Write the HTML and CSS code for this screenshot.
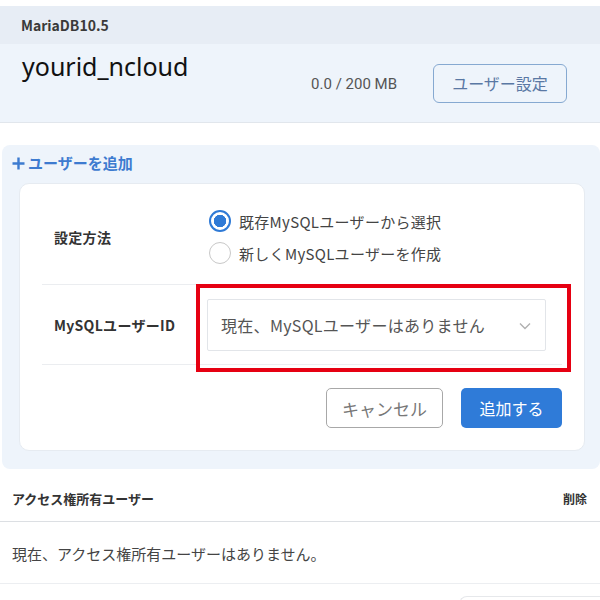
FILE: index.html
```html
<!DOCTYPE html>
<html lang="ja">
<head>
<meta charset="utf-8">
<link rel="stylesheet" href="styles.css">
</head>
<body>
<div class="page">
  <div class="db-header">MariaDB10.5</div>
  <div class="account">
    <div class="name">yourid_ncloud</div>
    <div class="usage">0.0 / 200 MB</div>
    <button class="btn-settings">ユーザー設定</button>
  </div>

  <section class="add-panel">
    <div class="add-title"><svg class="plus" width="13" height="13" viewBox="0 0 13 13"><path d="M6.5 0.5 V12.5 M0.5 6.5 H12.5" stroke="#3d7bd0" stroke-width="2.4" fill="none"/></svg>ユーザーを追加</div>
    <div class="card">
      <div class="row row-method">
        <div class="label">設定方法</div>
        <div class="field radios">
          <label class="radio"><span class="dot on"></span>既存MySQLユーザーから選択</label>
          <label class="radio"><span class="dot"></span>新しくMySQLユーザーを作成</label>
        </div>
      </div>
      <div class="row row-id">
        <div class="label">MySQLユーザーID</div>
        <div class="field">
          <div class="select">
            <span>現在、MySQLユーザーはありません</span>
            <svg class="chev" width="12" height="8" viewBox="0 0 12 8"><path d="M1 1.5 L6 6.5 L11 1.5" fill="none" stroke="#b0b0b0" stroke-width="1.4"/></svg>
          </div>
        </div>
      </div>
      <div class="actions">
        <button class="btn-cancel">キャンセル</button>
        <button class="btn-add">追加する</button>
      </div>
      <div class="highlight"></div>
    </div>
  </section>

  <div class="list-head">
    <span>アクセス権所有ユーザー</span>
    <span>削除</span>
  </div>
  <div class="list-empty">現在、アクセス権所有ユーザーはありません。</div>
  <div class="next-box"></div>
</div>
</body>
</html>
```

FILE: styles.css
```css
* { box-sizing: border-box; }
body {
  margin: 0;
  background: #fff;
  font-family: "Noto Sans CJK JP", "Noto Sans", "Liberation Sans", sans-serif;
  color: #333;
}
.page { width: 600px; padding-top: 6px; }

.db-header {
  height: 38px;
  background: #e7edf5;
  padding-left: 21px;
  display: flex;
  align-items: center;
  font-size: 14px;
  font-weight: bold;
  color: #3a3a3a;
}

.account {
  height: 79px;
  background: #eef4fb;
  border-bottom: 1px solid #e1e6ec;
  display: flex;
  align-items: center;
  padding: 0 33px 0 22px;
}
.name {
  align-self: flex-start;
  margin-top: 5px;
  font-size: 25px;
  line-height: 34px;
  color: #111;
  font-family: "Noto Sans", "Noto Sans CJK JP", sans-serif;
}
.usage {
  margin-left: auto;
  margin-right: 36px;
  margin-top: 2px;
  font-size: 15px;
  color: #555;
  font-family: "Roboto", "Noto Sans", sans-serif;
}
.btn-settings {
  width: 134px;
  height: 39px;
  border: 1px solid #86a9d1;
  border-radius: 6px;
  background: #eef4fb;
  color: #5a78a4;
  font-family: inherit;
  font-size: 16px;
}

.add-panel {
  margin: 22px 0 0 2px;
  background: #eef4fb;
  border-radius: 8px;
  padding: 8px 15px 18px 17px;
}
.add-title {
  height: 20px;
  line-height: 20px;
  font-size: 15px;
  font-weight: bold;
  color: #3d7bd0;
  margin-left: -7px;
  display: flex;
  align-items: center;
}
.plus {
  margin-right: 3px;
  flex: none;
}

.card {
  position: relative;
  margin-top: 10px;
  background: #fff;
  border: 1px solid #e6ebf1;
  border-radius: 10px;
  padding: 0 22px 22px 22px;
}
.row {
  display: grid;
  grid-template-columns: 164px 1fr;
  align-items: center;
  border-bottom: 1px solid #ebedf0;
}
.row-method { padding: 21px 0 15px; }
.row-id { padding: 14px 0 13px; }
.label {
  padding-left: 12px;
  font-size: 14px;
  letter-spacing: 0.3px;
  font-weight: bold;
  color: #333;
}
.radios { display: flex; flex-direction: column; }
.radio {
  display: flex;
  align-items: center;
  height: 32px;
  padding-left: 3px;
  font-size: 15px;
  letter-spacing: 0.3px;
  color: #444;
}
.dot {
  width: 22px;
  height: 22px;
  border-radius: 50%;
  border: 1.5px solid #c8c8c8;
  margin-right: 8px;
  background: #fff;
  flex: none;
}
.dot.on {
  border: 2px solid #2f7ad6;
  background: radial-gradient(circle, #2f7ad6 0 6px, #fff 6.5px);
}
.select {
  margin-left: 1px;
  width: 339px;
  height: 52px;
  border: 1px solid #e2e5e9;
  border-radius: 2px;
  display: flex;
  align-items: center;
  justify-content: space-between;
  padding: 0 14px 0 13px;
  font-size: 16px;
  letter-spacing: 0.3px;
  color: #555;
}
.chev { margin-top: 2px; }

.actions {
  display: flex;
  justify-content: flex-end;
  gap: 18px;
  margin-top: 23px;
}
.actions button {
  height: 40px;
  border-radius: 5px;
  font-family: inherit;
  font-size: 16px;
}
.btn-cancel {
  width: 117px;
  border: 1px solid #a8a8a8;
  background: #fff;
  color: #777;
  font-size: 17px !important;
}
.btn-add {
  width: 101px;
  border: none;
  background: #2f7bd8;
  color: #fff;
}

.highlight {
  position: absolute;
  left: 176px;
  top: 100px;
  width: 375px;
  height: 88px;
  border: 4px solid #e60012;
}

.list-head {
  height: 53px;
  display: flex;
  align-items: center;
  justify-content: space-between;
  padding: 6px 13px 0 12px;
  border-bottom: 1px solid #dcdfe3;
  font-size: 13px;
  font-weight: bold;
  color: #333;
}
.list-head span:last-child { font-size: 12px; }
.list-empty {
  height: 62px;
  display: flex;
  align-items: center;
  padding: 2px 12px 0;
  border-bottom: 1px solid #eceef1;
  font-size: 15px;
  color: #444;
}
.next-box {
  margin: 12px 0 0 459px;
  height: 20px;
  border: 1px solid #e6e8eb;
  border-radius: 8px 0 0 0;
  border-right: none;
}
```
